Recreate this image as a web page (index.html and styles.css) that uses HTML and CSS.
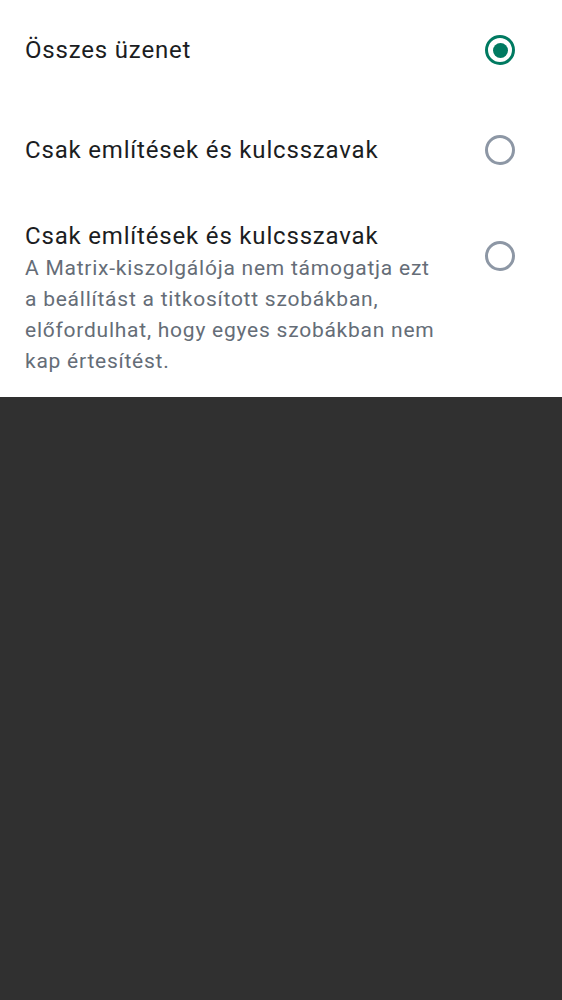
FILE: index.html
```html
<!DOCTYPE html>
<html lang="hu">
<head>
<meta charset="utf-8">
<link rel="stylesheet" href="styles.css">
</head>
<body>
<div class="sheet">
  <div class="row row-single">
    <div class="text"><div class="title">Összes üzenet</div></div>
    <div class="radio checked"><span class="dot"></span></div>
  </div>
  <div class="row row-single">
    <div class="text"><div class="title">Csak említések és kulcsszavak</div></div>
    <div class="radio"></div>
  </div>
  <div class="row row-multi">
    <div class="text">
      <div class="title">Csak említések és kulcsszavak</div>
      <div class="subtitle">A Matrix-kiszolgálója nem támogatja ezt a beállítást a titkosított szobákban, előfordulhat, hogy egyes szobákban nem kap értesítést.</div>
    </div>
    <div class="radio"></div>
  </div>
</div>
</body>
</html>
```
FILE: styles.css
```css
html, body {
  margin: 0;
  padding: 0;
  height: 100%;
}
body {
  background: #303030;
  font-family: Roboto, "Noto Sans", sans-serif;
}
.sheet {
  background: #ffffff;
  height: 397px;
}
.row {
  display: flex;
  justify-content: space-between;
  padding: 0 47px 0 25px;
}
.row-single {
  height: 100px;
  align-items: center;
}
.row-multi {
  align-items: flex-start;
  padding-top: 21px;
}
.text {
  flex: 1;
  padding-right: 42px;
}
.title {
  font-size: 24px;
  letter-spacing: 0.82px;
  color: #1b1d22;
  line-height: 30px;
}
.subtitle {
  font-size: 21px;
  letter-spacing: 0.76px;
  line-height: 31px;
  color: #656d77;
  margin-top: 2px;
}
.radio {
  width: 30px;
  height: 30px;
  box-sizing: border-box;
  border: 3px solid #8d97a5;
  border-radius: 50%;
  display: flex;
  align-items: center;
  justify-content: center;
  flex: none;
}
.row-multi .radio {
  margin-top: 20px;
}
.radio.checked {
  border-color: #007a61;
}
.radio .dot {
  width: 15px;
  height: 15px;
  border-radius: 50%;
  background: #007a61;
}
```
